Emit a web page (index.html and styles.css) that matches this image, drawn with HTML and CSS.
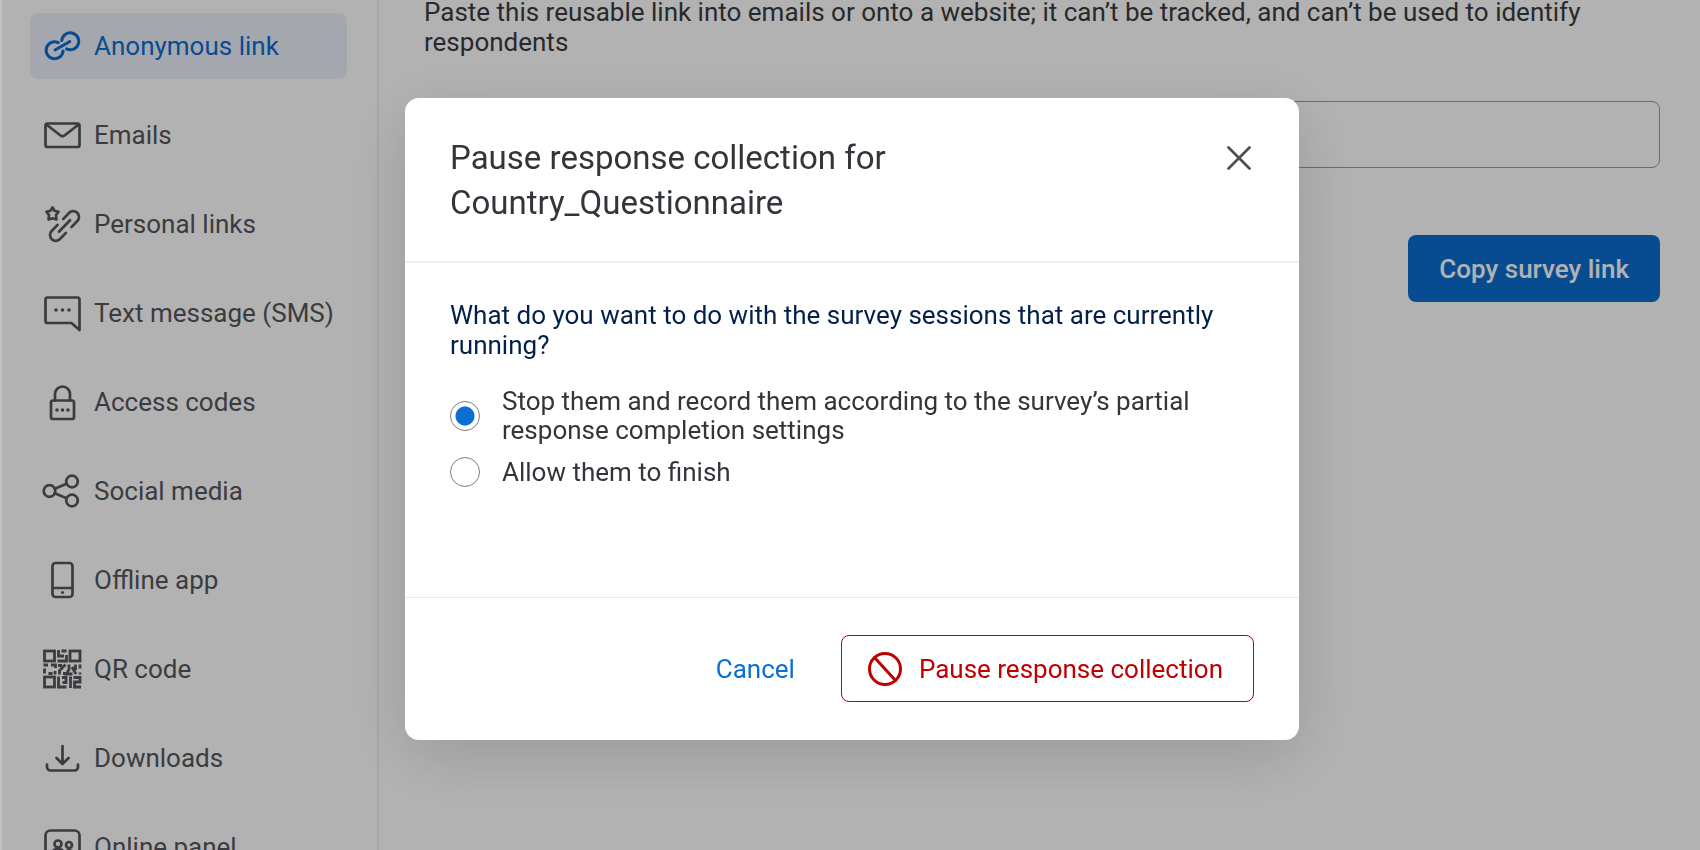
FILE: index.html
```
<!DOCTYPE html>
<html lang="en">
<head>
    <meta charset="UTF-8">
    <meta name="viewport" content="width=device-width, initial-scale=1.0">
    <title>Distributions</title>
    <link rel="stylesheet" href="styles.css">
</head>
<body>
    <div class="page">
        <nav class="sidebar">
            <a href="#" class="nav-item active">
                <svg class="icon link-icon" viewBox="0 0 40 40"><g transform="rotate(-30 20 20)"><path d="M18.5 15.2A8.5 8.5 0 1 0 18.5 24.8M22.500 15.200A8.500 8.500 0 1 1 22.500 24.800M12 20H29"/></g></svg>
                Anonymous link
            </a>
            <a href="#" class="nav-item">
                <svg class="icon" viewBox="0 0 40 40"><rect x="3.500" y="8.500" width="34" height="23.500" rx="2"/><path d="M5 10L18.500 20.500Q20.500 22 22.500 20.500L36 10"/></svg>
                Emails
            </a>
            <a href="#" class="nav-item">
                <svg class="icon" viewBox="0 0 40 40"><path d="M10.500 3.500l2 3.300 4 1-2.500 3.200.4 4.500-3.900-1.200-3.900 1.200.4-4.500-2.500-3.200 4-1z"/><g transform="translate(22.500 22) rotate(-46)"><path d="M-4-5.800H-12.500a5.800 5.800 0 0 0 0 11.600H-4M4-5.800H12.500a5.800 5.800 0 0 1 0 11.600H4M-8 0H8"/></g></svg>
                Personal links
            </a>
            <a href="#" class="nav-item">
                <svg class="icon" viewBox="0 0 40 40"><path d="M37.500 37V6.500a2 2 0 0 0-2-2H5.500a2 2 0 0 0-2 2V28a2 2 0 0 0 2 2H29.500z"/><g class="solid"><circle cx="14" cy="17" r="1.800"/><circle cx="20.500" cy="17" r="1.800"/><circle cx="27" cy="17" r="1.800"/></g></svg>
                Text message (SMS)
            </a>
            <a href="#" class="nav-item">
                <svg class="icon" viewBox="0 0 40 40"><rect x="9" y="18.500" width="23" height="18.500" rx="2"/><path d="M13 18.500V12a7.500 7.500 0 0 1 15 0v6.500"/><g class="solid"><circle cx="15" cy="28" r="1.800"/><circle cx="20.500" cy="28" r="1.800"/><circle cx="26" cy="28" r="1.800"/></g></svg>
                Access codes
            </a>
            <a href="#" class="nav-item">
                <svg class="icon" viewBox="0 0 40 40"><circle cx="7.500" cy="20" r="5.800"/><circle cx="30" cy="10.500" r="5.800"/><circle cx="30" cy="29.500" r="5.800"/><path d="M12.800 17.800L24.500 12.800M12.800 22.200L24.500 27.200"/></svg>
                Social media
            </a>
            <a href="#" class="nav-item">
                <svg class="icon" viewBox="0 0 40 40"><rect x="10.500" y="3" width="20" height="34" rx="3"/><path d="M10.500 28H30.500"/><circle class="solid" cx="20.500" cy="32.500" r="1.600"/></svg>
                Offline app
            </a>
            <a href="#" class="nav-item">
                <svg class="icon qr-icon" viewBox="0 0 40 40"><rect x="2.500" y="2" width="10" height="10"/><rect x="28" y="2" width="10" height="10"/><rect x="2.500" y="28" width="10" height="10"/><path d="M16.500 1v6H22M19.500 2H24.500M24.500 6v6H15.500M1.500 16H6M9 16h4.500v3M2.500 19.500v5M6.500 24.500h4M13 22v3.500M16 16.500h4M23.500 15.500l-6 6v4M21 24.500h3M27 15.500v5l-2.500 4.500h6M30 18l4 7M33.500 15.500V21M38 15.500v4M38 23.500v2M16.500 27.500v10.500H24.500M20 28.500h4v5H20.500M28.500 27.500V39M31.500 28.500H38v4.500H32.500v5H39"/></svg>
                QR code
            </a>
            <a href="#" class="nav-item">
                <svg class="icon" viewBox="0 0 40 40"><path d="M20.500 8V26M14.500 20l6 6 6-6M5 26.500v2.500a3.500 3.500 0 0 0 3.500 3.500h24a3.500 3.500 0 0 0 3.500-3.500v-2.500"/></svg>
                Downloads
            </a>
            <a href="#" class="nav-item">
                <svg class="icon" viewBox="0 0 40 40"><rect x="3.500" y="3.500" width="34" height="34" rx="5"/><circle cx="16" cy="17" r="3.500"/><circle cx="27" cy="18" r="3"/><path d="M9.500 30v-3q1-5 6.500-5t6.500 5v3M24.500 24q6-2 7.500 3v3"/></svg>
                Online panel
            </a>
        </nav>

        <main class="content">
            <p class="description" id="linkText">Paste this reusable link into emails or onto a website; it can’t be tracked, and can’t be used to identify respondents</p>
            <input type="text" class="link-input" aria-labelledby="linkText">
            <button type="button" class="btn btn-primary">Copy survey link</button>
        </main>
    </div>

    <div class="overlay">
        <div class="modal" role="dialog" aria-modal="true" aria-labelledby="modalTitle">
            <header class="modal-header">
                <h1 id="modalTitle">Pause response collection for Country_Questionnaire</h1>
                <button type="button" class="close" aria-label="Close">
                    <svg viewBox="0 0 24 24"><path d="M1.500 1.500L22.500 22.500M22.500 1.500L1.500 22.500"/></svg>
                </button>
            </header>
            <fieldset class="modal-body">
                <legend>What do you want to do with the survey sessions that are currently running?</legend>
                <div class="options">
                    <label class="option">
                        <input type="radio" name="sessions" value="stop" checked>
                        <span>Stop them and record them according to the survey’s partial response completion settings</span>
                    </label>
                    <label class="option">
                        <input type="radio" name="sessions" value="finish">
                        <span>Allow them to finish</span>
                    </label>
                </div>
            </fieldset>
            <footer class="modal-footer">
                <button type="button" class="btn btn-text">Cancel</button>
                <button type="button" class="btn btn-danger">
                    <svg viewBox="0 0 34 34"><circle cx="17" cy="17" r="15.500"/><path d="M6.500 5.500L27.500 28.500"/></svg>
                    Pause response collection
                </button>
            </footer>
        </div>
    </div>
</body>
</html>
```
FILE: styles.css
```
* { box-sizing: border-box; }
body { margin: 0; height: 100vh; overflow: hidden; background: #fff; color: #32363a; font-family: Roboto, Arial, sans-serif; font-size: 26px; line-height: 30px; }
button, input { font: inherit; }
button { cursor: pointer; }
svg { flex: none; fill: none; stroke: currentColor; stroke-width: 2.7; stroke-linecap: round; stroke-linejoin: round; }

/* the page behind the dialog, scrolled down a little */
.page { display: flex; margin-top: -16px; }

.sidebar { flex: none; display: flex; flex-direction: column; gap: 23px; width: 379px; padding: 29px 30px; border-right: 2px solid #eeeff2; }
.nav-item { display: flex; align-items: center; gap: 12px; height: 66px; padding: 0 12px; border-radius: 8px; color: #55575b; text-decoration: none; white-space: nowrap; }
.nav-item.active { background: #ecf0fb; color: #0b6ed0; }
.icon { width: 40px; height: 40px; }
.link-icon { stroke-width: 3; }
.qr-icon { stroke-width: 2.8; stroke-linecap: butt; stroke-linejoin: miter; }
.solid { fill: currentColor; stroke: none; }

.content { flex: 1; display: flex; flex-direction: column; align-items: flex-end; padding: 13px 40px 40px 45px; }
.description { width: 100%; margin: 0 0 44px; color: #393b3e; }
.link-input { width: 100%; height: 67px; padding: 0 20px; border: 1px solid #9a9b9d; border-radius: 8px; background: #fff; color: #32363a; }

.btn { height: 67px; padding: 0 30px; border: 1px solid transparent; border-radius: 8px; background: none; }
.btn-primary { margin-top: 67px; background: #0b6ed0; color: #fff; font-weight: 500; }
.btn-text { padding: 0; color: #0b6ed0; }
.btn-danger { display: flex; align-items: center; gap: 17px; padding: 0 30px 0 26px; border-color: #c00000; color: #c00000; }
.btn-danger svg { width: 34px; height: 34px; stroke-width: 3; }

.overlay { position: fixed; inset: 0; display: flex; justify-content: center; align-items: flex-start; padding: 98px 20px 20px 22px; border-left: 2px solid #c0c0c0; background: rgba(0, 0, 0, 0.3); background-clip: padding-box; }
.modal { width: 100%; max-width: 894px; border-radius: 14px; background: #fff; box-shadow: 0 16px 64px rgba(0, 0, 0, 0.14); }

.modal-header { display: flex; justify-content: space-between; align-items: flex-start; padding: 37px 45px 36px; border-bottom: 2px solid #f1f1f2; }
.modal-header h1 { max-width: 640px; margin: 0; font-size: 33px; line-height: 45px; font-weight: 400; }
.close { display: flex; margin-top: 8px; padding: 3px; border: none; background: none; color: #4d4f53; }
.close svg { width: 24px; height: 24px; }

.modal-body { margin: 0; padding: 37px 45px 110px; border: none; }
.modal-body legend { float: left; width: 100%; padding: 0; color: #032049; }
.options { display: flex; flex-direction: column; gap: 12px; clear: both; padding-top: 27px; line-height: 29px; }
.option { display: flex; align-items: center; gap: 22px; }
.option input { flex: none; appearance: none; width: 30px; height: 30px; margin: 0; border: 1px solid #7d7f82; border-radius: 50%; background: #fff; }
.option input:checked { background: radial-gradient(circle, #0b6ed0 9px, #fff 10px); }

.modal-footer { display: flex; justify-content: flex-end; align-items: center; gap: 45px; padding: 37px 45px 38px; border-top: 1px solid #e9e9ea; }
```
